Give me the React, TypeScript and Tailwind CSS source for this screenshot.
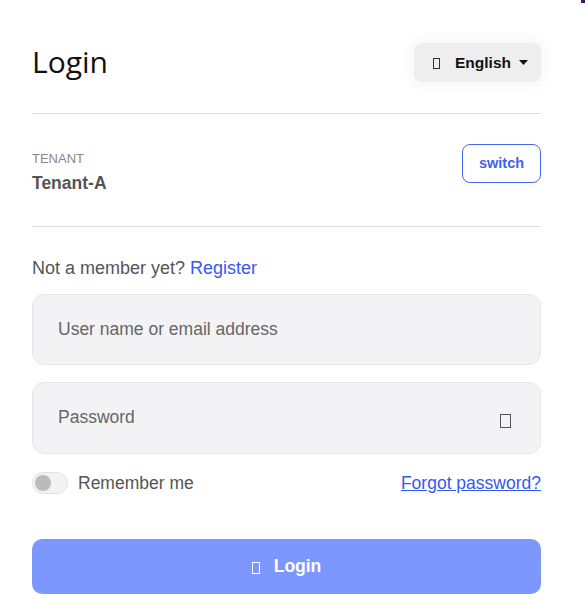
import React from "react";

function Tofu({ className = "" }: { className?: string }) {
  return <span className={"inline-block border border-current " + className} />;
}

export default function App() {
  return (
    <div className="w-[585px] h-[602px] bg-white relative overflow-hidden" style={{ fontFamily: '"Liberation Sans", Arial, sans-serif' }}>
      <div className="absolute right-0 top-0 w-[4px] h-[3px] bg-[#3b1a5a]" />
      <div className="px-[32px] pt-[43px] w-[573px]">
        <div className="flex items-center justify-between h-[39px]">
          <h1 className="text-[30px] leading-none text-[#111] font-normal mt-[-2px]" style={{ fontFamily: '"Open Sans", "Liberation Sans", sans-serif' }}>Login</h1>
          <button className="h-[39px] w-[127px] rounded-[8px] bg-[#eeeeee] flex items-center pl-[19px] text-[15px] font-bold text-[#111] shadow-[0_0_10px_6px_rgba(248,248,250,0.9)]">
            <Tofu className="w-[7px] h-[11px] text-[#333] mt-[2px]" />
            <span className="ml-[15px] text-[15.5px]">English</span>
            <svg width="9" height="5" viewBox="0 0 9 5" className="ml-[8px]"><path d="M0 0h9L4.5 5z" fill="#111" /></svg>
          </button>
        </div>
        <div className="h-px bg-[#dcdcdc] mt-[31px]" />
        <div className="flex justify-between pt-[30px] h-[112px]">
          <div>
            <div className="text-[13px] text-[#888] leading-none pt-[8px]">TENANT</div>
            <div className="text-[17.5px] font-bold text-[#555] leading-none mt-[10px]">Tenant-A</div>
          </div>
          <button className="w-[79px] h-[39px] rounded-[8px] border border-[#4667f5] text-[#3f5ef3] text-[14.5px] font-bold">switch</button>
        </div>
        <div className="h-px bg-[#dcdcdc]" />
        <div className="text-[18px] text-[#555] mt-[32px] leading-none">
          Not a member yet? <span className="text-[#3558f6]">Register</span>
        </div>
        <div className="mt-[17px] h-[71px] rounded-[12px] bg-[#f3f3f5] border border-[#e6e6e8] flex items-center pl-[25px] text-[17.5px] text-[#666]">
          User name or email address
        </div>
        <div className="mt-[17px] h-[72px] rounded-[12px] bg-[#f3f3f5] border border-[#e6e6e8] flex justify-between pl-[25px] pr-[29px] text-[17.5px] text-[#666]">
          <span className="pt-[21px]">Password</span>
          <Tofu className="w-[11px] h-[14px] text-[#555] mt-[31px]" />
        </div>
        <div className="mt-[17px] flex items-center justify-between h-[24px]">
          <div className="flex items-center gap-[10px]">
            <div className="w-[36px] h-[22px] rounded-full bg-[#f3f3f3] border border-[#e3e3e3] flex items-center pl-[2px]">
              <div className="w-[16px] h-[16px] rounded-full bg-[#bbbbbb]" />
            </div>
            <span className="text-[17.5px] text-[#555]">Remember me</span>
          </div>
          <span className="text-[17.5px] text-[#3558f6] underline">Forgot password?</span>
        </div>
        <button className="mt-[44px] w-full h-[55px] rounded-[10px] bg-[#7c97fe] text-white text-[17.5px] font-bold flex items-center justify-center gap-[14px]">
          <Tofu className="w-[8px] h-[12px] text-white mt-[3px]" />
          <span>Login</span>
        </button>
      </div>
    </div>
  );
}
